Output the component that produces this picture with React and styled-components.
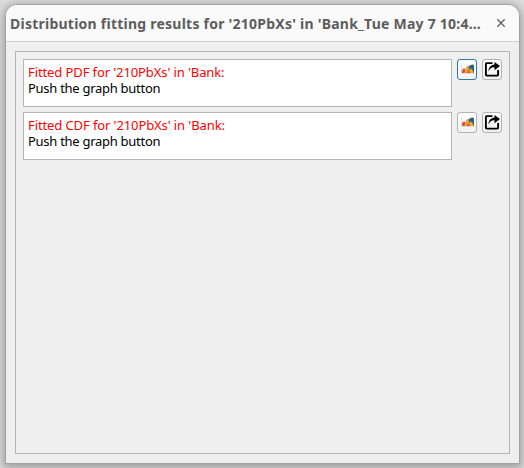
import React from 'react';
import styled, { createGlobalStyle } from 'styled-components';

const GlobalStyle = createGlobalStyle`
  * { box-sizing: border-box; }
  body { margin: 0; overflow: hidden; font-family: "Noto Sans", "Open Sans", sans-serif; }
`;

const Desktop = styled.div`
  width: 524px;
  height: 468px;
  padding: 4px 4px 4px 5px;
  overflow: hidden;
  background: #dcdcdc;
`;

const Window = styled.main`
  width: 515px;
  height: 460px;
  display: flex;
  flex-direction: column;
  overflow: hidden;
  border: 1px solid #a2a2a2;
  border-radius: 12px 12px 0 0;
  background: #efefef;
  box-shadow: 0 2px 9px 2px rgba(0, 0, 0, 0.28);
`;

const TitleBar = styled.header`
  height: 37px;
  flex: none;
  display: flex;
  align-items: center;
  justify-content: space-between;
  padding: 0 13px 0 4px;
  border-bottom: 1px solid #cfcfcf;
  background: #fafafa;
`;

const Title = styled.h1`
  margin: 0;
  padding-top: 1px;
  color: #5d5d5d;
  font-size: 14px;
  line-height: 21px;
  font-weight: 700;
  letter-spacing: 0.24px;
  white-space: nowrap;
`;

const CloseButton = styled.button`
  width: 10px;
  height: 10px;
  padding: 0;
  border: 0;
  background: none;
  svg { display: block; }
`;

const Results = styled.section`
  flex: 1;
  margin: 9px;
  padding: 7px;
  display: flex;
  flex-direction: column;
  gap: 5px;
  border: 1px solid #b4b4b4;
`;

const ResultRow = styled.div`
  display: flex;
  align-items: flex-start;
  gap: 5px;
`;

const ResultText = styled.div`
  width: 429px;
  height: 48px;
  padding: 4px;
  border: 1px solid #b6b6b6;
  background: #fff;
  font-size: 13px;
  line-height: 16px;
  white-space: nowrap;
`;

const Line = styled.div`
  color: ${({ $heading }) => ($heading ? '#ff0000' : '#000')};
  letter-spacing: ${({ $heading }) => ($heading ? '-0.1px' : '-0.28px')};
`;

const ToolButton = styled.button`
  width: 20px;
  height: 21px;
  padding: 0;
  display: flex;
  align-items: center;
  justify-content: center;
  border: 1px solid ${({ $focused }) => ($focused ? '#3478a5' : '#b3b3b3')};
  border-radius: 3px;
  background: linear-gradient(#fff, #f1f1f1);
  svg { display: block; flex: none; }
`;

const CloseIcon = () => (
  <svg width="10" height="10" viewBox="0 0 10 10">
    <path d="M1.3 1.3 8.7 8.7M8.7 1.3 1.3 8.7" stroke="#5d5d5d" strokeWidth="1.25" fill="none" />
  </svg>
);

const GraphIcon = () => (
  <svg width="18" height="19" viewBox="0 0 18 19">
    <path d="M3.5 4.5v9h12.5" stroke="#cdd3da" strokeWidth=".7" fill="none" />
    <path d="M9 13V7h1.5V5.8H12V5h1.5v-.6H15V5h1v8z" fill="#2d6584" />
    <path d="M4 13V10.4L5 9l1-.8L7.2 9l1.3 4z" fill="#dc5145" />
    <path d="M6.3 13 8 8l1.3-2.5L11 8l1.5 5z" fill="#f0a329" />
    <path d="M10.2 13 12 9.4l1-.9 1.3 1.6L15.8 13z" fill="#edb128" />
    <path d="M8.5 13 10.6 9.5l1.7 3.5z" fill="#d95d35" />
  </svg>
);

const ExportIcon = () => (
  <svg width="18" height="19" viewBox="0 0 18 19">
    <path d="M9.5 3.1H3.6Q2.9 3.1 2.9 3.8v11q0 .8.8.8h10.6q.8 0 .8-.8V10" fill="none" stroke="#000" strokeWidth="1.9" />
    <path d="M5.5 11.4C5.7 7.4 7.8 4.9 11.5 4.6V2L17 6.1l-5.5 4.1V7.3C8.9 7 7 8.5 5.5 11.4z" fill="#000" />
  </svg>
);

const results = [
  { kind: 'PDF', focused: true },
  { kind: 'CDF', focused: false },
];

export default function App() {
  return (
    <Desktop>
      <GlobalStyle />
      <Window>
        <TitleBar>
          <Title>Distribution fitting results for '210PbXs' in 'Bank_Tue May 7 10:4…</Title>
          <CloseButton aria-label="Close"><CloseIcon /></CloseButton>
        </TitleBar>
        <Results>
          {results.map(({ kind, focused }) => (
            <ResultRow key={kind}>
              <ResultText>
                <Line $heading>{`Fitted ${kind} for '210PbXs' in 'Bank:`}</Line>
                <Line>Push the graph button</Line>
              </ResultText>
              <ToolButton $focused={focused} aria-label="Graph"><GraphIcon /></ToolButton>
              <ToolButton aria-label="Export"><ExportIcon /></ToolButton>
            </ResultRow>
          ))}
        </Results>
      </Window>
    </Desktop>
  );
}
